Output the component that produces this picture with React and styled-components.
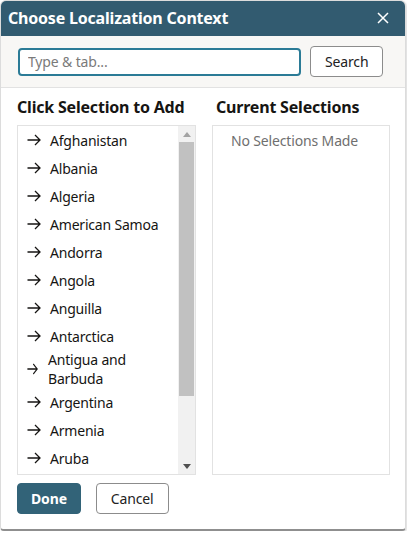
import React from "react";
import styled, { createGlobalStyle } from "styled-components";

const GlobalStyle = createGlobalStyle`
  html, body {
    margin: 0;
    padding: 0;
    background: #ffffff;
    font-family: "Noto Sans", "Open Sans", sans-serif;
  }
  * {
    box-sizing: border-box;
  }
`;

const Dialog = styled.div`
  width: 406px;
  height: 531px;
  display: flex;
  flex-direction: column;
  background: #ffffff;
  border: 1px solid #dcdcdc;
  border-bottom: 2px solid #8f8f8f;
  border-radius: 6px 6px 4px 4px;
  box-shadow: 1px 1px 2px rgba(0, 0, 0, 0.15);
  overflow: hidden;
`;

const Header = styled.div`
  height: 36px;
  flex: none;
  display: flex;
  align-items: center;
  justify-content: space-between;
  padding: 0 16px 0 8px;
  margin: -1px -1px 0;
  background: #325b70;
  color: #ffffff;
`;

const Title = styled.h1`
  margin: 0;
  font-size: 16px;
  font-weight: 700;
  letter-spacing: -0.2px;
`;

const Close = styled.button`
  border: 0;
  background: none;
  padding: 0;
  width: 14px;
  height: 14px;
  display: flex;
  color: #ffffff;
  cursor: pointer;
`;

const SearchBand = styled.div`
  height: 52px;
  flex: none;
  display: flex;
  align-items: center;
  gap: 9px;
  padding: 0 0 0 17px;
  background: #f8f7f5;
  border-bottom: 1px solid #e2e2e2;
`;

const Input = styled.input`
  flex: none;
  width: 283px;
  height: 28px;
  border: 2px solid #2b7b96;
  border-radius: 4px;
  padding: 0 8px;
  font-family: inherit;
  font-size: 14px;
  letter-spacing: -0.15px;
  color: #222;
  background: #ffffff;
  outline: none;
  &::placeholder {
    color: #7a7a7a;
  }
`;

const Button = styled.button`
  height: 31px;
  flex: none;
  padding: 0 ${(p) => p.$pad || 14}px;
  border-radius: 4px;
  font-family: inherit;
  font-size: 14px;
  line-height: 19px;
  letter-spacing: -0.15px;
  cursor: pointer;
  border: 1px solid ${(p) => (p.$primary ? "#326378" : "#8c8c8c")};
  background: ${(p) => (p.$primary ? "#326378" : "#ffffff")};
  color: ${(p) => (p.$primary ? "#ffffff" : "#222222")};
  font-weight: ${(p) => (p.$primary ? 700 : 400)};
`;

const Body = styled.div`
  flex: none;
  display: grid;
  grid-template-columns: 179px 178px;
  column-gap: 16px;
  padding: 8px 0 0 16px;
`;

const Column = styled.div`
  display: flex;
  flex-direction: column;
`;

const Heading = styled.h2`
  margin: 0;
  height: 29px;
  padding-left: ${(p) => p.$indent || 0}px;
  font-size: 16px;
  font-weight: 700;
  color: #161513;
  line-height: 22px;
  letter-spacing: -0.2px;
`;

const Box = styled.div`
  height: 350px;
  border: 1px solid #e2e2e2;
  display: flex;
`;

const List = styled.ul`
  flex: 1;
  list-style: none;
  margin: 0;
  padding: 0;
  overflow: hidden;
`;

const Item = styled.li`
  min-height: 28px;
  display: flex;
  align-items: center;
  gap: 9px;
  padding-left: 9px;
  font-size: 14px;
  line-height: 19px;
  letter-spacing: -0.2px;
  color: #161513;
  cursor: pointer;
`;

const Arrow = styled.svg`
  flex: none;
  width: ${(p) => (p.$compact ? 11 : 14)}px;
  height: 12px;
  margin-right: ${(p) => (p.$compact ? 1 : 0)}px;
`;

const Scrollbar = styled.div`
  width: 17px;
  flex: none;
  display: flex;
  flex-direction: column;
  align-items: center;
  background: #f1f1f1;
`;

const ScrollArrow = styled.div`
  height: 16px;
  flex: none;
  display: flex;
  align-items: center;
  justify-content: center;
`;

const Thumb = styled.div`
  width: 15px;
  height: 254px;
  background: #c1c1c1;
`;

const Spacer = styled.div`
  flex: 1;
`;

const Empty = styled.div`
  padding: 5px 0 0 18px;
  font-size: 14px;
  line-height: 19px;
  letter-spacing: -0.15px;
  color: #6f6f6f;
`;

const Footer = styled.div`
  flex: none;
  display: flex;
  gap: 15px;
  padding: 8px 16px 0;
`;

const countries = [
  "Afghanistan",
  "Albania",
  "Algeria",
  "American Samoa",
  "Andorra",
  "Angola",
  "Anguilla",
  "Antarctica",
  "Antigua and Barbuda",
  "Argentina",
  "Armenia",
  "Aruba",
];

const ArrowIcon = ({ compact }) => (
  <Arrow $compact={compact} viewBox="0 0 14 12" preserveAspectRatio="none">
    <path
      d="M0.5 6H13M8 1l5 5-5 5"
      fill="none"
      stroke="#161513"
      strokeWidth="1.3"
    />
  </Arrow>
);

const App = () => {
  return (
    <>
      <GlobalStyle />
      <Dialog>
        <Header>
          <Title>Choose Localization Context</Title>
          <Close aria-label="Close">
            <svg width="14" height="14" viewBox="0 0 14 14">
              <path d="M2 2l10 10M12 2L2 12" stroke="#fff" strokeWidth="1.5" />
            </svg>
          </Close>
        </Header>
        <SearchBand>
          <Input placeholder="Type & tab..." />
          <Button $pad={14}>Search</Button>
        </SearchBand>
        <Body>
          <Column>
            <Heading>Click Selection to Add</Heading>
            <Box>
              <List>
                {countries.map((c) => {
                  const compact = c.length > 16;
                  return (
                    <Item key={c}>
                      <ArrowIcon compact={compact} />
                      <span>{c}</span>
                    </Item>
                  );
                })}
              </List>
              <Scrollbar>
                <ScrollArrow>
                  <svg width="8" height="5" viewBox="0 0 8 5">
                    <path d="M0 5L4 0l4 5z" fill="#a3a3a3" />
                  </svg>
                </ScrollArrow>
                <Thumb />
                <Spacer />
                <ScrollArrow>
                  <svg width="8" height="5" viewBox="0 0 8 5">
                    <path d="M0 0h8L4 5z" fill="#505050" />
                  </svg>
                </ScrollArrow>
              </Scrollbar>
            </Box>
          </Column>
          <Column>
            <Heading $indent={4}>Current Selections</Heading>
            <Box>
              <Empty>No Selections Made</Empty>
            </Box>
          </Column>
        </Body>
        <Footer>
          <Button $primary $pad={13}>Done</Button>
          <Button $pad={14}>Cancel</Button>
        </Footer>
      </Dialog>
    </>
  );
};

export default App;
